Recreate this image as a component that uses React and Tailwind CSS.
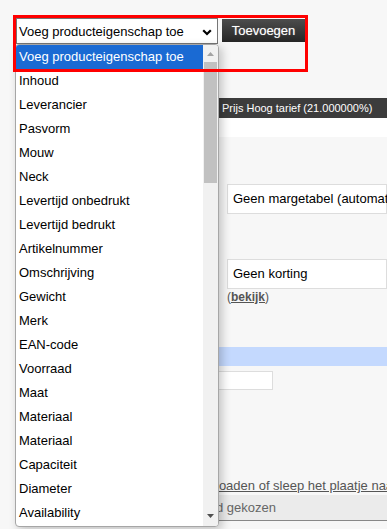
import React from "react";

const items = [
  "Voeg producteigenschap toe",
  "Inhoud",
  "Leverancier",
  "Pasvorm",
  "Mouw",
  "Neck",
  "Levertijd onbedrukt",
  "Levertijd bedrukt",
  "Artikelnummer",
  "Omschrijving",
  "Gewicht",
  "Merk",
  "EAN-code",
  "Voorraad",
  "Maat",
  "Materiaal",
  "Materiaal",
  "Capaciteit",
  "Diameter",
  "Availability",
];

export default function App() {
  return (
    <div className="relative w-[387px] h-[529px] overflow-hidden bg-[#f7f7f7] font-['Liberation_Sans',Arial,sans-serif] text-black">
      {/* top row */}
      <div className="flex items-start pt-[18px] pl-[16px]">
        <div className="relative flex items-center w-[202px] h-[26px] bg-white border border-[#767676] pl-[2px]">
          <span className="text-[13px] leading-none">Voeg producteigenschap toe</span>
          <svg className="absolute right-[5px] top-[10px]" width="10" height="7" viewBox="0 0 10 7">
            <polyline points="1.2,1.2 5,5 8.8,1.2" fill="none" stroke="#000" strokeWidth="2.2" />
          </svg>
        </div>
        <div className="ml-[4px] mt-[1px] w-[83px] h-[23px] flex items-center justify-center bg-gradient-to-b from-[#4d4d4d] to-[#262626] text-white text-[13px] [text-shadow:0_0_1px_rgba(255,255,255,0.5)]">
          Toevoegen
        </div>
      </div>

      {/* page content behind the dropdown */}
      <div className="ml-[194px] mt-[54px] flex flex-col">
        <div className="h-[20px] bg-[#3c3c3c] text-white text-[11px] flex items-center pl-[28px] whitespace-nowrap">
          Prijs Hoog tarief (21.000000%)
        </div>
        <div className="h-[19px] bg-white" />
        <div className="mt-[47px] ml-[33px] h-[30px] bg-white border border-[#dddddd] flex items-center pl-[5px] text-[13px] whitespace-nowrap">
          Geen margetabel (automatisch)
        </div>
        <div className="mt-[45px] ml-[33px] h-[30px] bg-white border border-[#dddddd] flex items-center pl-[5px] text-[13px] whitespace-nowrap">
          Geen korting
        </div>
        <div className="ml-[33px] mt-[1px] text-[12px] leading-[14px] text-[#555555]">
          (<span className="font-bold underline">bekijk</span>)
        </div>
        <div className="mt-[43px] h-[19px] bg-[#c4d9fe]" />
        <div className="mt-[5px] w-[79px] h-[19px] bg-white border border-[#dddddd]" />
        <div className="mt-[88px] pl-[22px] text-[13px] leading-[16px] text-[#555555] underline whitespace-nowrap">
          loaden of sleep het plaatje naar dit vak
        </div>
        <div className="mt-[1px] h-[26px] bg-[#ebebeb] border-b border-[#888888] flex items-center pl-[22px] text-[13px] text-[#666666] whitespace-nowrap">
          d gekozen
        </div>
      </div>

      {/* dropdown popup */}
      <div className="absolute left-[15px] top-[44px] w-[204px] h-[483px] bg-white border border-[#a6a6a6] rounded-[4px] shadow-[3px_3px_10px_rgba(0,0,0,0.22)] flex overflow-hidden">
        <div className="flex-1 flex flex-col">
          {items.map((t, i) => (
            <div
              key={i}
              className={
                i === 0
                  ? "h-[24px] shrink-0 flex items-center pl-[3px] text-[13px] bg-[#1a6ad3] text-white"
                  : "h-[24px] shrink-0 flex items-center pl-[3px] text-[13px]"
              }
            >
              {t}
            </div>
          ))}
        </div>
        <div className="relative w-[15px] bg-[#f1f1f1]">
          <svg className="absolute left-[4px] top-[7px]" width="7" height="4" viewBox="0 0 7 4">
            <polygon points="0,4 3.5,0 7,4" fill="#a3a3a3" />
          </svg>
          <div className="absolute left-[1px] right-[1px] top-[17px] h-[121px] bg-[#c1c1c1]" />
          <svg className="absolute left-[4px] bottom-[8px]" width="7" height="4" viewBox="0 0 7 4">
            <polygon points="0,0 7,0 3.5,4" fill="#505050" />
          </svg>
        </div>
      </div>

      {/* red annotation frame */}
      <div className="absolute left-[13px] top-[15px] w-[295px] h-[57px] border-[3px] border-[#ff0000] pointer-events-none" />
    </div>
  );
}
